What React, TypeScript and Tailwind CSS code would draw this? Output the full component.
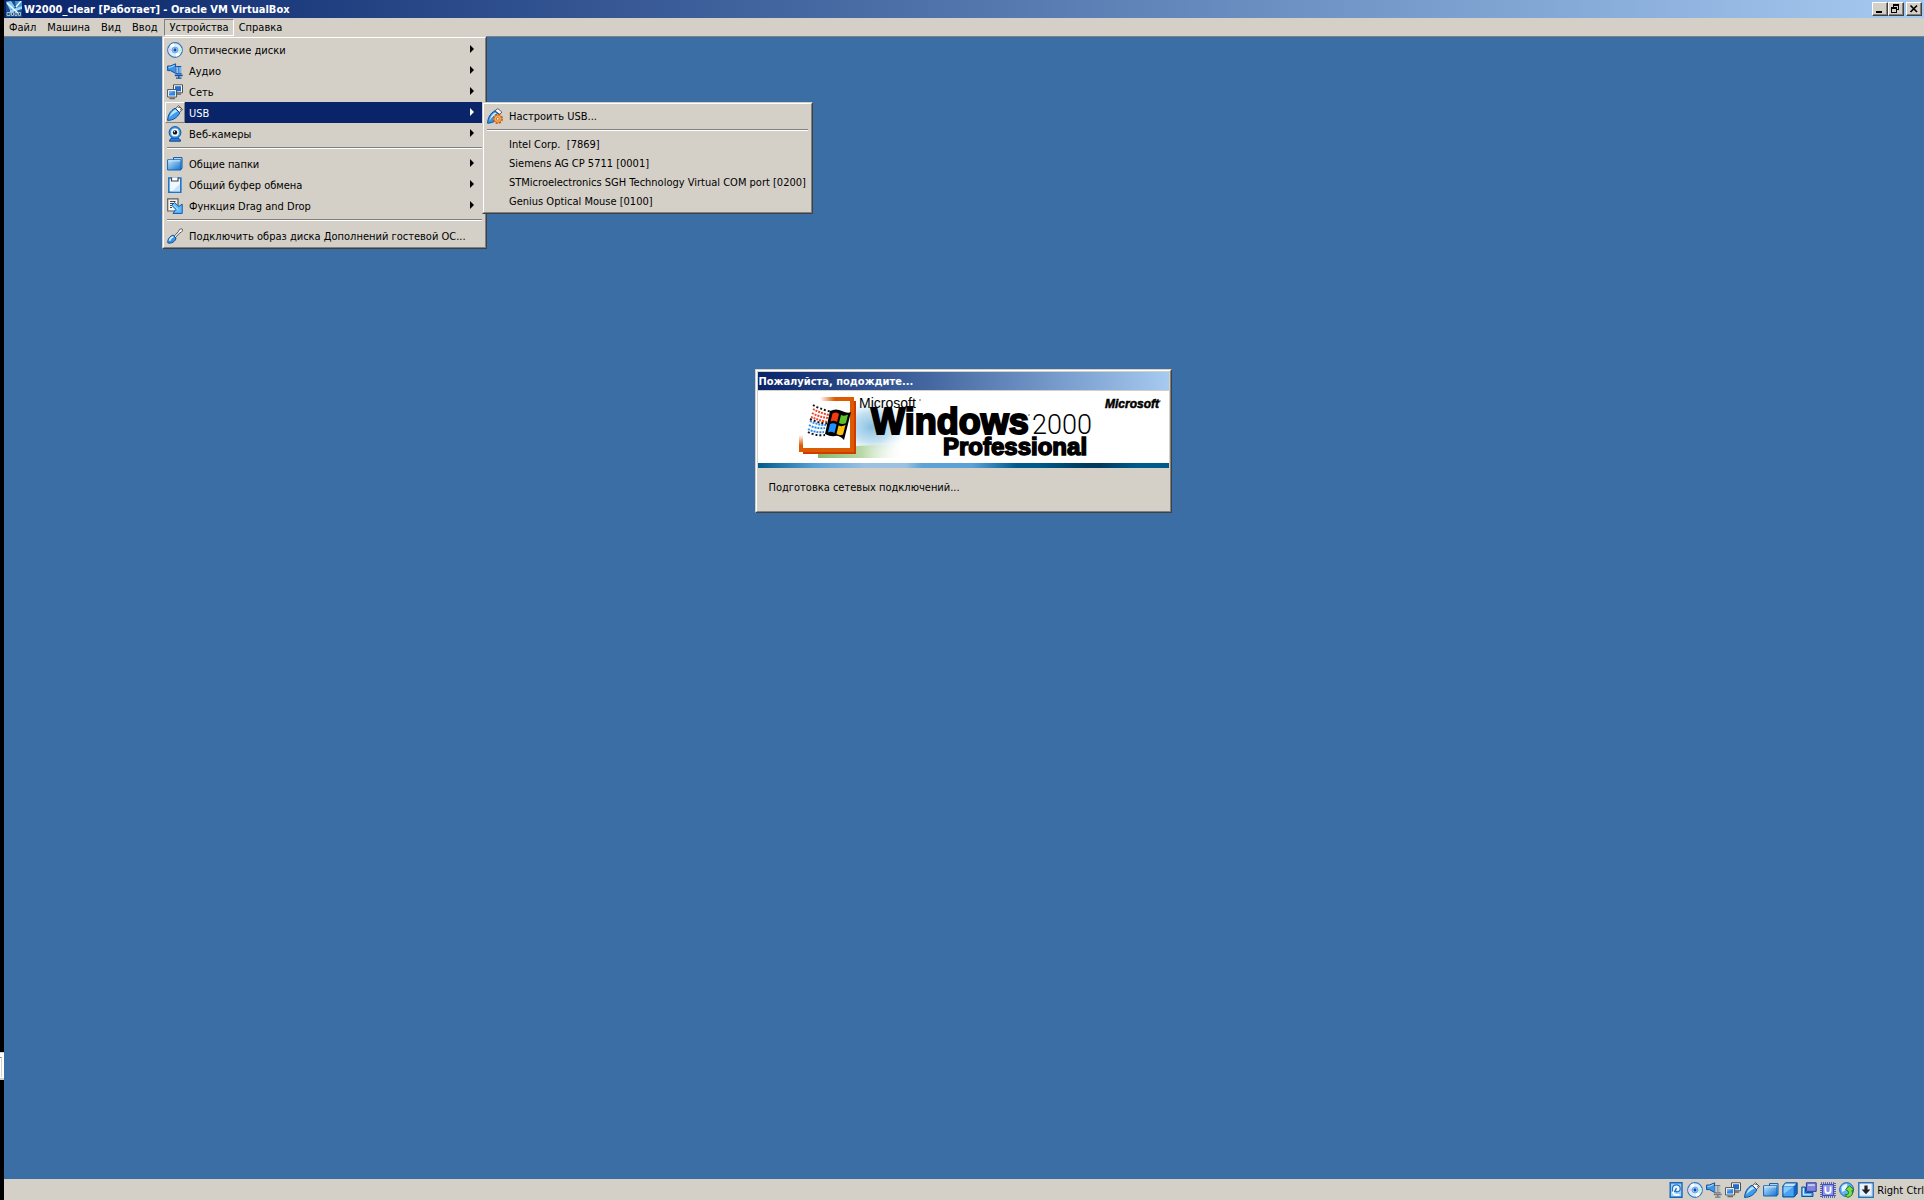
import React from "react";

type IconProps = { children: React.ReactNode };

function Svg16({ children }: IconProps) {
  return (
    <svg width="16" height="16" viewBox="0 0 16 16" className="block shrink-0" aria-hidden="true">
      {children}
    </svg>
  );
}

function DiscIcon() {
  return (
    <Svg16>
      <circle cx="8" cy="8" r="7.3" fill="#dcecfb" stroke="#2f78c4" strokeWidth="1.2" />
      <path d="M8 8 3 3.2A7 7 0 0 1 7 1.2Z" fill="#fff" />
      <path d="M8 8 13 12.8A7 7 0 0 1 9 14.8Z" fill="#fff" />
      <path d="M8 8 14.6 6A7 7 0 0 1 14.6 10Z" fill="#c9f0d8" />
      <path d="M8 8 1.4 6A7 7 0 0 0 1.4 10Z" fill="#e2ccf6" />
      <circle cx="8" cy="8" r="3" fill="#8cc4f7" stroke="#5c9fe0" strokeWidth="0.8" />
      <circle cx="8" cy="8" r="1.4" fill="#0c4d9c" />
    </Svg16>
  );
}

function AudioIcon({ muted = false }: { muted?: boolean }) {
  const body = muted ? "#9a9ea2" : "#3c8fe0";
  const edge = muted ? "#74787c" : "#1450a0";
  return (
    <Svg16>
      <path d="M.6 3H3.4L8.6.8V10.4L3.4 7.6H.6Z" fill="#3c95e8" stroke="#10509e" />
      <path d="M1.5 4.3H3.6L7.6 2.400" stroke="#bfe2ff" fill="none" />
      <path d="M9.500 3.500H14V11H9.500Z" fill={body} stroke={edge} />
      <path d="M8.500 5h2.500M12.500 5H15M8.500 7h2.500M12.500 7H15M8.500 9h2.500M12.500 9H15" stroke="#e4f1fc" />
      <path d="M8.500 11.500v1H15v-1M11.800 12v3M9 15.200h5.500" stroke={edge} fill="none" strokeWidth="1.3" />
    </Svg16>
  );
}

function NetworkIcon() {
  return (
    <Svg16>
      <path d="M6.5 .8h9v8h-9Z" fill="#fff" stroke="#4e4e4e" />
      <path d="M8 2.2h6v5.2H8Z" fill="#1f6fd0" />
      <path d="M9.500 9.300h4.500v1.500h-4.500z" fill="#6b6b6b" />
      <path d="M.6 5.600h9v7.400h-9Z" fill="#fff" stroke="#4e4e4e" />
      <path d="M2 7h6.200v4.600H2Z" fill="#2e86e4" />
      <path d="M2 7h6.200L2 10Z" fill="#63aef5" />
      <path d="M2.500 14.500h5.500" stroke="#6b6b6b" strokeWidth="1.500" />
    </Svg16>
  );
}

function UsbIcon() {
  return (
    <Svg16>
      <path d="M8.600 3.600 11.600.7 15.400 4.400 12.400 7.400Z" fill="#fbfbfb" stroke="#4c4c4c" />
      <path d="M11.400 2.500h1.200M13.200 4.300h1.200" stroke="#333" />
      <path d="M.6 15.400C.8 10.600 3 5.600 8.200 3.200L12.800 7.800C10.500 12.600 6 15.400.6 15.400Z" fill="#3f9cec" stroke="#0d4a96" />
      <path d="M2.2 12.600C3.400 8.600 5.600 6 8.400 4.600L10.400 6.600C7 8.200 4.500 10 2.200 12.600Z" fill="#bfe6ff" />
    </Svg16>
  );
}

function UsbSettingsIcon() {
  return (
    <Svg16>
      <path d="M7.600 3 10.800.6 14.800 4 13 6.400Z" fill="#fbfbfb" stroke="#5c5c5c" />
      <path d="M.6 15.200C.8 10 3 5.400 8 2.800L13 7.400C11 12 6 15 .6 15.200Z" fill="#3a94e6" stroke="#0d4a96" />
      <path d="M2.200 13C3.200 8.800 5.400 5.600 8.200 4.400L10 6C6.500 7.600 4.200 10 2.200 13Z" fill="#d2edff" />
      <circle cx="10.8" cy="10.8" r="4.2" fill="#fff" stroke="#b5561a" strokeWidth="1.8" strokeDasharray="2 1.300" />
      <circle cx="10.8" cy="10.8" r="3.7" fill="#fbb04c" stroke="#c8641c" strokeWidth="0.8" />
      <circle cx="10.8" cy="10.8" r="1.4" fill="#fff" stroke="#b5561a" strokeWidth="0.8" />
    </Svg16>
  );
}

function WebcamIcon() {
  return (
    <Svg16>
      <path d="M2.500 15.200c0-2.400 2-3.400 5.500-3.400s5.500 1 5.500 3.400Z" fill="#2e7fd8" stroke="#0e4a96" />
      <circle cx="8" cy="6.5" r="5.900" fill="#3f9cf0" stroke="#0f559f" />
      <circle cx="8" cy="6.4" r="3.900" fill="#f4fbff" />
      <circle cx="8" cy="6.400" r="2.200" fill="#111" />
      <circle cx="7.400" cy="5.700" r="0.700" fill="#fff" />
    </Svg16>
  );
}

function FolderIcon() {
  return (
    <Svg16>
      <path d="M6.500 3V1.600H15V12.500H6Z" fill="#bfe2fb" stroke="#0f559f" />
      <path d="M.6 3.800H14V14H.6Z" fill="url(#folderFace)" stroke="#0f62b4" />
      <path d="M1.200 4.800H13.400" stroke="#d4efff" />
      <defs>
        <linearGradient id="folderFace" x1="0" y1="0" x2="1" y2="1">
          <stop offset="0" stopColor="#c6e9ff" />
          <stop offset="1" stopColor="#1070d0" />
        </linearGradient>
      </defs>
    </Svg16>
  );
}

function ClipboardIcon() {
  return (
    <Svg16>
      <path d="M1.800 1H13.800V15.200H1.800Z" fill="#f0f8ff" stroke="#1f74cc" strokeWidth="1.600" />
      <path d="M12.800 7v7.200H5Z" fill="#c7e3fb" />
      <path d="M4.500 .5V4H11V.5" fill="#fff" stroke="#444" strokeWidth="1.200" />
    </Svg16>
  );
}

function DragDropIcon() {
  return (
    <Svg16>
      <path d="M.7.8H11V13H.7Z" fill="#f3f3f3" stroke="#5c5c5c" strokeWidth="1.200" />
      <path d="M3 3.500h5.500M3 5.500h3M3 7.500h2M3 9.500h2" stroke="#444" />
      <path d="M4.800 7.200 7.600 4.400 11.800 8.600 15.200 6.200V15.400H6L8.800 11.400Z" fill="#62baf8" stroke="#0d58a8" />
      <path d="M6.400 7.200 11.500 12" stroke="#c8ebff" />
    </Svg16>
  );
}

function GuestDiscIcon() {
  return (
    <Svg16>
      <path d="M7 8.400 11.400 3.600C11.600 1.400 14.400.2 15.300 1.200 16 2.200 14.800 4.600 12.800 4.800L8.400 9.600Z" fill="#fff" stroke="#555" />
      <path d="M.8 14.800C.2 11.400 3.600 7.400 6.200 7.200L9 10C8.800 13.200 4 16.200.8 14.800Z" fill="#3a94e6" stroke="#0d4a96" />
      <path d="M2.400 12.800C3 10.800 5 9 6.400 8.800" stroke="#d2edff" strokeWidth="1.800" fill="none" />
    </Svg16>
  );
}

function HardDiskIcon() {
  return (
    <Svg16>
      <path d="M2.200 .8H14V15.200H2.200Z" fill="#9ad0fa" stroke="#1663b8" strokeWidth="1.400" />
      <path d="M4.500 10V6Q5 2.800 8.400 2.800T12.200 6.200 8.600 9.800L7 8.400" fill="#eef8ff" stroke="#2272c4" strokeWidth="1.200" />
      <path d="M4.600 9.500 6.500 12.800H11.500" fill="none" stroke="#fff" strokeWidth="1.800" />
      <path d="M8.500 6 6.500 10" stroke="#1663b8" strokeWidth="1.200" />
    </Svg16>
  );
}

function DisplayIcon() {
  return (
    <Svg16>
      <path d="M3.500.8H15.200V11.500L12.200 15H.8V4Z" fill="#1565be" stroke="#0f519e" />
      <path d="M3.600 1.500H14.200L12 4H1.600Z" fill="#bfe4ff" />
      <path d="M1.600 4.600H11.600V14.200H1.600Z" fill="#48a2f0" />
      <path d="M1.600 4.600H11.600L1.600 12Z" fill="#86c8fa" />
    </Svg16>
  );
}

function CaptureIcon() {
  return (
    <Svg16>
      <path d="M.8 5H4.500V10.500H12V14.500H.8Z" fill="#4aa4f2" stroke="#11529f" />
      <path d="M2.400 6v6.800H10" stroke="#e4f5ff" fill="none" />
      <path d="M5.400.8H15.200V9.400H5.400Z" fill="#7c84dc" stroke="#2f3a9c" />
      <path d="M7 2.200h6.800v1.800H7z" fill="#c9ccf8" />
    </Svg16>
  );
}

function ChipIcon() {
  return (
    <Svg16>
      <path d="M1 1H15V15H1Z" fill="none" stroke="#3844b0" strokeWidth="1.600" strokeDasharray="1 1" />
      <path d="M2.400 2.400H13.600V13.600H2.400Z" fill="#8d96e8" stroke="#3844b0" />
      <path d="M5.400 4.400V8.600Q5.400 11.200 8 11.200T10.600 8.600V4.400" fill="none" stroke="#fff" strokeWidth="1.800" />
    </Svg16>
  );
}

function MouseIcon() {
  return (
    <Svg16>
      <circle cx="7.600" cy="7.600" r="7" fill="#64b2f2" stroke="#1663b8" />
      <path d="M2.500 5Q5 1.600 8.400 2.200L7 8 3 10Z" fill="#e2f4ff" />
      <path d="M6.500 7.500 10.500 3.800 15 7.600 12.800 8.600Q15.500 13.600 8.600 15.500L6.200 12.600Q11 12.800 9 9Z" fill="#7ade4c" stroke="#227a10" />
    </Svg16>
  );
}

function HostKeyIcon() {
  return (
    <Svg16>
      <path d="M.8.8H15.200V15.200H.8Z" fill="#e8f3fd" stroke="#2a70ba" strokeWidth="1.400" />
      <path d="M2 14.200H14.200V2" fill="none" stroke="#85b4df" />
      <path d="M6.400 3.400H9.600V7.400H12.400L8 12.200 3.600 7.400H6.400Z" fill="#222" />
    </Svg16>
  );
}

function MachineIcon() {
  return (
    <Svg16>
      <path d="M0 0H16V16H0Z" fill="#17508c" />
      <path d="M0 1 5 0 9 6 4 9Z" fill="#7cc6f2" />
      <path d="M9 0 16 0V5L10 7Z" fill="#3f92d6" />
      <path d="M4 9 16 5V8L4 12Z" fill="#9bd6f7" />
      <path d="M10 6 15 0M1 2 12 12" stroke="#fff" strokeWidth="1.300" />
      <path d="M1 11.500h3v3H1zM5.500 11.500h2v3h-2zM9 11.500h2v3H9zM12.500 11.500h2v3h-2z" fill="none" stroke="#c9d4dd" strokeWidth="0.800" />
    </Svg16>
  );
}

function Arrow() {
  return (
    <svg width="4" height="8" viewBox="0 0 4 8" className="mr-2.5 mb-0.5 block shrink-0" aria-hidden="true">
      <path d="M0 0 4 4 0 8Z" fill="currentColor" />
    </svg>
  );
}

const panel =
  "border border-t-[#d4d0c8] border-l-[#d4d0c8] border-r-[#404040] border-b-[#404040] bg-[#d4d0c8]";
const panelInner = "border border-t-white border-l-white border-r-[#808080] border-b-[#808080] p-px";

function Separator() {
  return (
    <div role="separator" className="px-0.5 pt-[3px] pb-1">
      <div className="h-0.5 border-t border-b border-t-[#808080] border-b-white" />
    </div>
  );
}

function MenuItem({
  icon,
  label,
  submenu = false,
  active = false,
}: {
  icon: React.ReactNode;
  label: string;
  submenu?: boolean;
  active?: boolean;
}) {
  return (
    <button
      type="button"
      role="menuitem"
      aria-haspopup={submenu ? "menu" : undefined}
      className={
        active
          ? "flex h-[21px] w-full items-center bg-[#0a246a] text-left text-white"
          : "flex h-[21px] w-full items-center text-left"
      }
    >
      <span
        className={
          active
            ? "flex h-full w-5 items-center justify-center border border-t-white border-l-white border-r-[#808080] border-b-[#808080] bg-[#d4d0c8]"
            : "flex h-full w-5 items-center justify-center"
        }
      >
        {icon}
      </span>
      <span className="flex-1 pt-0.5 pl-1">{label}</span>
      {submenu && <Arrow />}
    </button>
  );
}

function DevicesMenu() {
  return (
    <div role="menu" aria-label="Устройства" className={`absolute top-[18px] left-[158px] z-10 w-[325px] ${panel}`}>
      <div className={panelInner}>
        <MenuItem icon={<DiscIcon />} label="Оптические диски" submenu />
        <MenuItem icon={<AudioIcon />} label="Аудио" submenu />
        <MenuItem icon={<NetworkIcon />} label="Сеть" submenu />
        <div className="relative">
          <MenuItem icon={<UsbIcon />} label="USB" submenu active />
          <UsbMenu />
        </div>
        <MenuItem icon={<WebcamIcon />} label="Веб-камеры" submenu />
        <Separator />
        <MenuItem icon={<FolderIcon />} label="Общие папки" submenu />
        <MenuItem icon={<ClipboardIcon />} label="Общий буфер обмена" submenu />
        <MenuItem icon={<DragDropIcon />} label="Функция Drag and Drop" submenu />
        <Separator />
        <MenuItem icon={<GuestDiscIcon />} label="Подключить образ диска Дополнений гостевой ОС..." />
      </div>
    </div>
  );
}

const usbDevices = [
  "Intel Corp.  [7869]",
  "Siemens AG CP 5711 [0001]",
  "STMicroelectronics SGH Technology Virtual COM port [0200]",
  "Genius Optical Mouse [0100]",
];

function UsbMenu() {
  return (
    <div role="menu" aria-label="USB" className={`absolute top-0 left-full z-20 -ml-0.5 w-[331px] ${panel}`}>
      <div className={panelInner}>
        <MenuItem icon={<UsbSettingsIcon />} label="Настроить USB..." />
        <Separator />
        {usbDevices.map((device) => (
          <button
            key={device}
            type="button"
            role="menuitem"
            className="block h-[19px] w-full pt-px pl-6 text-left whitespace-pre"
          >
            {device}
          </button>
        ))}
      </div>
    </div>
  );
}

const captionButton =
  "flex h-3.5 w-4 items-center justify-center border border-t-white border-l-white border-r-[#404040] border-b-[#404040] bg-[#d4d0c8] shadow-[inset_-1px_-1px_0_#808080]";

function TitleBar() {
  return (
    <header className="flex h-[18px] items-center bg-linear-to-r from-[#0a246a] to-[#a6caf0] px-0.5 text-white">
      <MachineIcon />
      <h1 className="flex-1 pt-px pl-0.5 font-bold">W2000_clear [Работает] - Oracle VM VirtualBox</h1>
      <button type="button" aria-label="Свернуть" className={captionButton}>
        <svg width="12" height="10" viewBox="0 0 12 10" aria-hidden="true">
          <path d="M2 7H8V9H2Z" fill="#000" />
        </svg>
      </button>
      <button type="button" aria-label="Восстановить" className={captionButton}>
        <svg width="12" height="10" viewBox="0 0 12 10" aria-hidden="true" shapeRendering="crispEdges">
          <path d="M3 0H9V6H7V5H8V2H4V3H3ZM1 3H7V9H1ZM2 5V8H6V5Z" fill="#000" fillRule="evenodd" />
        </svg>
      </button>
      <button type="button" aria-label="Закрыть" className={`ml-0.5 ${captionButton}`}>
        <svg width="12" height="10" viewBox="0 0 12 10" aria-hidden="true">
          <path d="M2.500 1.500 9 8M9 1.500 2.500 8" stroke="#000" strokeWidth="1.700" />
        </svg>
      </button>
    </header>
  );
}

function MenuBar() {
  const item = "h-[17px] border border-transparent pt-px pr-[5px] pl-1";
  return (
    <nav role="menubar" className="relative flex h-[19px] border-b border-[#808080] bg-[#d4d0c8] pt-px">
      <button type="button" role="menuitem" className={item}>Файл</button>
      <button type="button" role="menuitem" className={item}>Машина</button>
      <button type="button" role="menuitem" className={item}>Вид</button>
      <button type="button" role="menuitem" className={item}>Ввод</button>
      <button
        type="button"
        role="menuitem"
        aria-expanded="true"
        className="h-[17px] border border-t-[#808080] border-r-white border-b-white border-l-[#808080] pt-px pr-1 pl-[5px]"
      >
        Устройства
      </button>
      <button type="button" role="menuitem" className={item}>Справка</button>
      <DevicesMenu />
    </nav>
  );
}

function Banner() {
  return (
    <svg viewBox="0 0 411 72" className="block h-[72px] w-[411px] bg-white" role="img" aria-label="Microsoft Windows 2000 Professional">
      <defs>
        <linearGradient id="fadeLeft" x1="0" x2="1" y1="0" y2="0">
          <stop offset="0" stopColor="#dc5a00" stopOpacity="0" />
          <stop offset="0.5" stopColor="#dc5a00" />
        </linearGradient>
        <linearGradient id="fadeUp" x1="0" x2="0" y1="0" y2="1">
          <stop offset="0" stopColor="#dc5a00" stopOpacity="0" />
          <stop offset="0.8" stopColor="#dc5a00" />
        </linearGradient>
        <radialGradient id="sky">
          <stop offset="0" stopColor="#86bfe2" />
          <stop offset="0.5" stopColor="#b4d9ee" stopOpacity="0.8" />
          <stop offset="1" stopColor="#fff" stopOpacity="0" />
        </radialGradient>
        <linearGradient id="grass" x1="0" x2="1" y1="0" y2="0">
          <stop offset="0" stopColor="#86ba66" />
          <stop offset="0.5" stopColor="#b9d8a8" />
          <stop offset="1" stopColor="#fff" stopOpacity="0" />
        </linearGradient>
      </defs>
      <ellipse cx="114" cy="36" rx="40" ry="30" fill="url(#sky)" />
      <path d="M60 62 98 55Q125 53 148 55L146 67H60Z" fill="url(#grass)" />
      <path d="M96 10H98V63H45V61H96Z" fill="#d03c00" />
      <path d="M41 7H96V61H41Z" fill="#fff" />
      <path d="M62 6H92V10H62Z" fill="url(#fadeLeft)" />
      <path d="M41 44H45V57H41Z" fill="url(#fadeUp)" />
      <path d="M92 6H96V61H41V57H92Z" fill="#dc5a00" />
      <path d="M72 20Q78 17 84 20T93 21L86 49Q81 44 77 45T67 43Z" fill="#000" />
      <path d="M74.500 22.500Q78 20.500 81 23L79 31Q76 29 72.500 30.500Z" fill="#f03a10" />
      <path d="M83 24Q87 25.500 90 23.500L88 32Q84.500 34 81 32Z" fill="#5cc02c" />
      <path d="M72 33Q75.500 31.500 78.500 33.500L76.500 42Q73 40 70 41.500Z" fill="#1e90ff" />
      <path d="M80.500 34.500Q84 36 87.500 34L85 43.500Q81.500 45 78.500 43Z" fill="#fcc010" />
      <path d="M55 18Q62 22 71 24M54 22Q61 26 70 27M53 26Q60 29 69 31" fill="none" stroke="#f0442a" strokeWidth="2" strokeDasharray="2 1" />
      <path d="M52 30Q59 34 68 34M51 34Q58 38 67 37M50 38Q57 42 66 41" fill="none" stroke="#2a8cf0" strokeWidth="2" strokeDasharray="2 1" />
      <path d="M55 14Q62 18 72 20.500M52 28Q60 32 69 32.500M50 41Q57 45 67 44" fill="none" stroke="#111" strokeWidth="2" strokeDasharray="2 2" />
      <text x="101" y="17" fontSize="14" fontFamily="Liberation Sans, sans-serif">Microsoft</text>
      <text x="113" y="43" fontSize="36" fontWeight="700" fontFamily="Liberation Sans, sans-serif" stroke="#000" strokeWidth="2">Windows</text>
      <text x="274" y="43" fontSize="27" fontWeight="300" fontFamily="Roboto, sans-serif">2000</text>
      <text x="185" y="64" fontSize="24" fontWeight="700" fontFamily="Liberation Sans, sans-serif" stroke="#000" strokeWidth="1.500">Professional</text>
      <text x="347" y="17" fontSize="12" fontWeight="700" fontStyle="italic" fontFamily="Liberation Sans, sans-serif" stroke="#000" strokeWidth="0.500">Microsoft</text>
      <circle cx="162" cy="9" r="0.800" fill="#555" />
      <circle cx="271" cy="24" r="0.800" fill="#555" />
      <circle cx="402" cy="10" r="0.800" fill="#555" />
    </svg>
  );
}

function WaitDialog() {
  return (
    <section role="dialog" aria-labelledby="wait-title" className={`w-[417px] ${panel}`}>
      <div className={panelInner}>
        <h2
          id="wait-title"
          className="h-[18px] bg-linear-to-r from-[#0a246a] to-[#a6caf0] pt-px pl-px leading-[18px] font-bold text-white"
        >
          Пожалуйста, подождите...
        </h2>
        <div className="mt-px">
          <Banner />
        </div>
        <div className="h-[5px] bg-[linear-gradient(90deg,#005a8c_0%,#5ba3d6_14%,#9cc0e0_26%,#9cc0e0_36%,#5ba3d6_40%,#5ba3d6_52%,#005a8c_63%,#005a8c_68%,#003a5c_80%,#003a5c_83%,#005a8c_92%,#005a8c_100%)]" />
        <p className="h-[42px] pt-[13px] pl-[11px]">Подготовка сетевых подключений...</p>
      </div>
    </section>
  );
}

function StatusBar() {
  return (
    <footer className="flex h-[21px] items-center justify-end gap-[3px] bg-[#d4d0c8] pt-px">
      <HardDiskIcon />
      <DiscIcon />
      <AudioIcon muted />
      <NetworkIcon />
      <UsbIcon />
      <FolderIcon />
      <DisplayIcon />
      <CaptureIcon />
      <ChipIcon />
      <MouseIcon />
      <HostKeyIcon />
      <span className="pt-px">Right Ctrl</span>
    </footer>
  );
}

export default function App() {
  return (
    <div className="flex h-screen overflow-hidden bg-black font-['DejaVu_Sans_Condensed','DejaVu_Sans',sans-serif] text-[11px] leading-[14px] text-black">
      <aside className="flex w-1 shrink-0 flex-col justify-end pb-[120px]">
        <div className="h-7 border-t border-b-2 border-[#d4d0c8] bg-white">
          <div className="mt-1 h-5 w-0.5 border-t border-r border-t-[#808080] border-r-[#d4d0c8]" />
        </div>
      </aside>
      <div className="flex min-w-0 flex-1 flex-col">
        <TitleBar />
        <MenuBar />
        <main className="flex flex-1 items-start justify-center bg-[#3a6ea5] pt-[332px] pr-0.5">
          <WaitDialog />
        </main>
        <StatusBar />
      </div>
    </div>
  );
}
